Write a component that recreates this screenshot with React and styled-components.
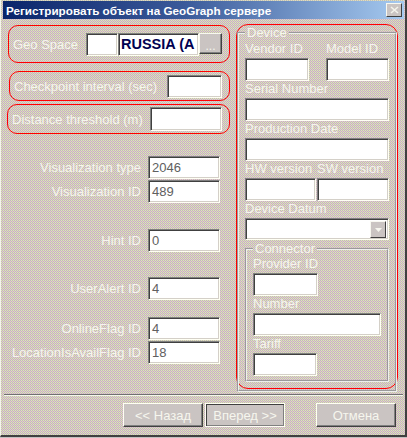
import styled, { createGlobalStyle } from 'styled-components'

const GlobalStyle = createGlobalStyle`
  body {
    margin: 0;
    background: #c4c0c0;
    font-family: "Liberation Sans", Arial, sans-serif;
  }
`

const dither = `
  background-color: #c6c0c0;
  background-image: conic-gradient(#c0bcbc 0 25%, #e6c6ce 0 50%, #c0bcbc 0 75%, #e2e2b6 0);
  background-size: 2px 2px;
`

const flat = '#cac4c2'

const Window = styled.div`
  width: 407px;
  height: 437px;
  box-sizing: border-box;
  display: flex;
  flex-direction: column;
  padding: 1px 1px 0 2px;
  border-left: 1px solid #f4f4ec;
  border-right: 2px solid #404040;
  border-bottom: 2px solid #404040;
  ${dither}
`

const TitleBar = styled.div`
  height: 18px;
  flex-shrink: 0;
  display: flex;
  align-items: center;
  justify-content: space-between;
  padding: 0 2px 0 3px;
  background: linear-gradient(90deg, #0a246a 0%, #3a5a9a 45%, #a6caf0 100%);
  color: #fff;
  font-weight: bold;
  font-size: 11.7px;
  white-space: nowrap;
`

const CloseBtn = styled.div`
  width: 16px;
  height: 14px;
  box-sizing: border-box;
  display: flex;
  align-items: center;
  justify-content: center;
  background: ${flat};
  border: 1px solid;
  border-color: #f8f8f0 #404040 #404040 #f8f8f0;
  svg { display: block; }
`

const Content = styled.div`
  height: 375px;
  flex-shrink: 0;
  display: flex;
  align-items: flex-start;
  padding: 5px 0 0 4px;
  box-sizing: border-box;
`

const LeftCol = styled.div`
  width: 223px;
  display: flex;
  flex-direction: column;
`

const RedBox = styled.div`
  height: ${p => p.$h}px;
  margin-top: ${p => p.$top}px;
  margin-left: ${p => p.$left || 0}px;
  box-sizing: border-box;
  border: 1px solid #ff0000;
  border-radius: 10px;
  display: flex;
  align-items: center;
  justify-content: space-between;
  padding: 0 7px 0 4px;
`

const Label = styled.span`
  color: #f6f6ee;
  font-size: 13px;
  white-space: nowrap;
`

const Input = styled.div`
  width: ${p => p.$w}px;
  height: ${p => p.$h || 23}px;
  box-sizing: border-box;
  background: #fff;
  border: 1px solid;
  border-color: #808080 #fffff4 #fffff4 #808080;
  box-shadow: inset 1px 1px #404040, inset -1px -1px #d4d0c8;
  padding: 3px 0 0 3px;
  font-size: 13px;
  color: #606060;
  overflow: hidden;
  white-space: nowrap;
`

const GeoGroup = styled.div`
  display: flex;
  align-items: flex-start;
  height: 23px;
`

const GeoName = styled(Input)`
  color: #000050;
  font-weight: bold;
  font-size: 14.5px;
  padding: 2px 0 0 2px;
`

const SmallBtn = styled.div`
  width: 23px;
  height: 21px;
  box-sizing: border-box;
  border: 1px solid;
  border-color: #f8f8f0 #404040 #404040 #f8f8f0;
  box-shadow: inset -1px -1px #808080;
  color: #f6f6ee;
  font-size: 12px;
  text-align: center;
  line-height: 24px;
  background: ${flat};
`

const FieldList = styled.div`
  margin-top: 22px;
  display: flex;
  flex-direction: column;
`

const FieldRow = styled.div`
  display: flex;
  align-items: center;
  margin-top: ${p => p.$space}px;
  gap: 7px;
  ${Label} {
    width: 134px;
    text-align: right;
  }
`

const RightCol = styled.div`
  width: 162px;
  height: 365px;
  margin: 0 0 0 6px;
  box-sizing: border-box;
  border: 1px solid #ff0000;
  border-radius: 12px;
`

const Group = styled.fieldset`
  margin: ${p => p.$margin};
  padding: ${p => p.$pad};
  border: 2px groove #eeeeee;
  min-width: 0;
  display: flex;
  flex-direction: column;
  legend {
    color: #f6f6ee;
    font-size: 13px;
    padding: 0 2px;
    line-height: 15px;
  }
`

const Field = styled.div`
  display: flex;
  flex-direction: column;
  ${Label} {
    height: 17px;
    line-height: 16px;
  }
`

const Pair = styled.div`
  display: flex;
  gap: ${p => p.$gap}px;
`

const Select = styled(Input)`
  display: flex;
  justify-content: flex-end;
  padding: 2px;
`

const DropBtn = styled.div`
  width: 16px;
  height: 17px;
  box-sizing: border-box;
  border: 1px solid;
  border-color: #f8f8f0 #404040 #404040 #f8f8f0;
  display: flex;
  align-items: center;
  justify-content: center;
  background: ${flat};
`

const Separator = styled.div`
  height: 2px;
  flex-shrink: 0;
  box-sizing: border-box;
  border-top: 1px solid #707070;
  border-bottom: 1px solid #f4f4ec;
  margin: 0 1px;
`

const ButtonRow = styled.div`
  display: flex;
  justify-content: flex-end;
  padding: 7px 8px 0 0;
  gap: 2px;
`

const Button = styled.div`
  width: 80px;
  height: 24px;
  box-sizing: border-box;
  margin-left: ${p => p.$gapLeft || 0}px;
  display: flex;
  align-items: center;
  justify-content: center;
  color: #f6f6ee;
  font-size: 13px;
  border: 1px solid;
  border-color: ${p => (p.$pressed ? '#fffff4' : '#fffff4 #404040 #404040 #fffff4')};
  box-shadow: ${p => (p.$pressed ? 'inset 1px 1px #404040, inset -1px -1px #808080' : 'inset -1px -1px #808080')};
  background: ${flat};
`

const leftFields = [
  { label: 'Visualization type', value: '2046', space: 0 },
  { label: 'Visualization ID', value: '489', space: 1 },
  { label: 'Hint ID', value: '0', space: 26 },
  { label: 'UserAlert ID', value: '4', space: 25 },
  { label: 'OnlineFlag ID', value: '4', space: 17 },
  { label: 'LocationIsAvailFlag ID', value: '18', space: 1 },
]

function App() {
  return (
    <>
      <GlobalStyle />
      <Window>
        <TitleBar>
          <span>Регистрировать объект на GeoGraph сервере</span>
          <CloseBtn>
            <svg width="9" height="8" viewBox="0 0 9 8">
              <path d="M1 1 L8 7 M8 1 L1 7" stroke="#f4f4ec" strokeWidth="1.6" />
            </svg>
          </CloseBtn>
        </TitleBar>

        <Content>
          <LeftCol>
            <RedBox $h={38} $top={1} $left={1}>
              <Label>Geo Space</Label>
              <GeoGroup>
                <Input $w={32} />
                <GeoName $w={81}>RUSSIA (A</GeoName>
                <SmallBtn>...</SmallBtn>
              </GeoGroup>
            </RedBox>
            <RedBox $h={30} $top={8} $left={2}>
              <Label>Checkpoint interval (sec)</Label>
              <Input $w={55} />
            </RedBox>
            <RedBox $h={30} $top={3}>
              <Label>Distance threshold (m)</Label>
              <Input $w={72} $h={24} />
            </RedBox>

            <FieldList>
              {leftFields.map(f => (
                <FieldRow key={f.label} $space={f.space}>
                  <Label>{f.label}</Label>
                  <Input $w={72}>{f.value}</Input>
                </FieldRow>
              ))}
            </FieldList>
          </LeftCol>

          <RightCol>
            <Group $margin="0" $pad="1px 6px 8px 6px">
              <legend>Device</legend>
              <Pair $gap={17}>
                <Field>
                  <Label>Vendor ID</Label>
                  <Input $w={64} />
                </Field>
                <Field>
                  <Label>Model ID</Label>
                  <Input $w={63} />
                </Field>
              </Pair>
              <Field>
                <Label>Serial Number</Label>
                <Input $w={144} />
              </Field>
              <Field>
                <Label>Production Date</Label>
                <Input $w={144} />
              </Field>
              <Pair $gap={1}>
                <Field>
                  <Label>HW version</Label>
                  <Input $w={71} />
                </Field>
                <Field>
                  <Label>SW version</Label>
                  <Input $w={72} />
                </Field>
              </Pair>
              <Field>
                <Label>Device Datum</Label>
                <Select $w={144} $h={22}>
                  <DropBtn>
                    <svg width="7" height="4" viewBox="0 0 7 4">
                      <path d="M0 0 H7 L3.5 4 Z" fill="#f6f6ee" />
                    </svg>
                  </DropBtn>
                </Select>
              </Field>
              <Group $margin="1px 0 0 0" $pad="0 6px 4px 6px">
                <legend>Connector</legend>
                <Field>
                  <Label>Provider ID</Label>
                  <Input $w={65} />
                </Field>
                <Field>
                  <Label>Number</Label>
                  <Input $w={128} />
                </Field>
                <Field>
                  <Label>Tariff</Label>
                  <Input $w={64} />
                </Field>
              </Group>
            </Group>
          </RightCol>
        </Content>

        <Separator />

        <ButtonRow>
          <Button>&lt;&lt; Назад</Button>
          <Button $pressed>Вперед &gt;&gt;</Button>
          <Button $gapLeft={29}>Отмена</Button>
        </ButtonRow>
      </Window>
    </>
  )
}

export default App
